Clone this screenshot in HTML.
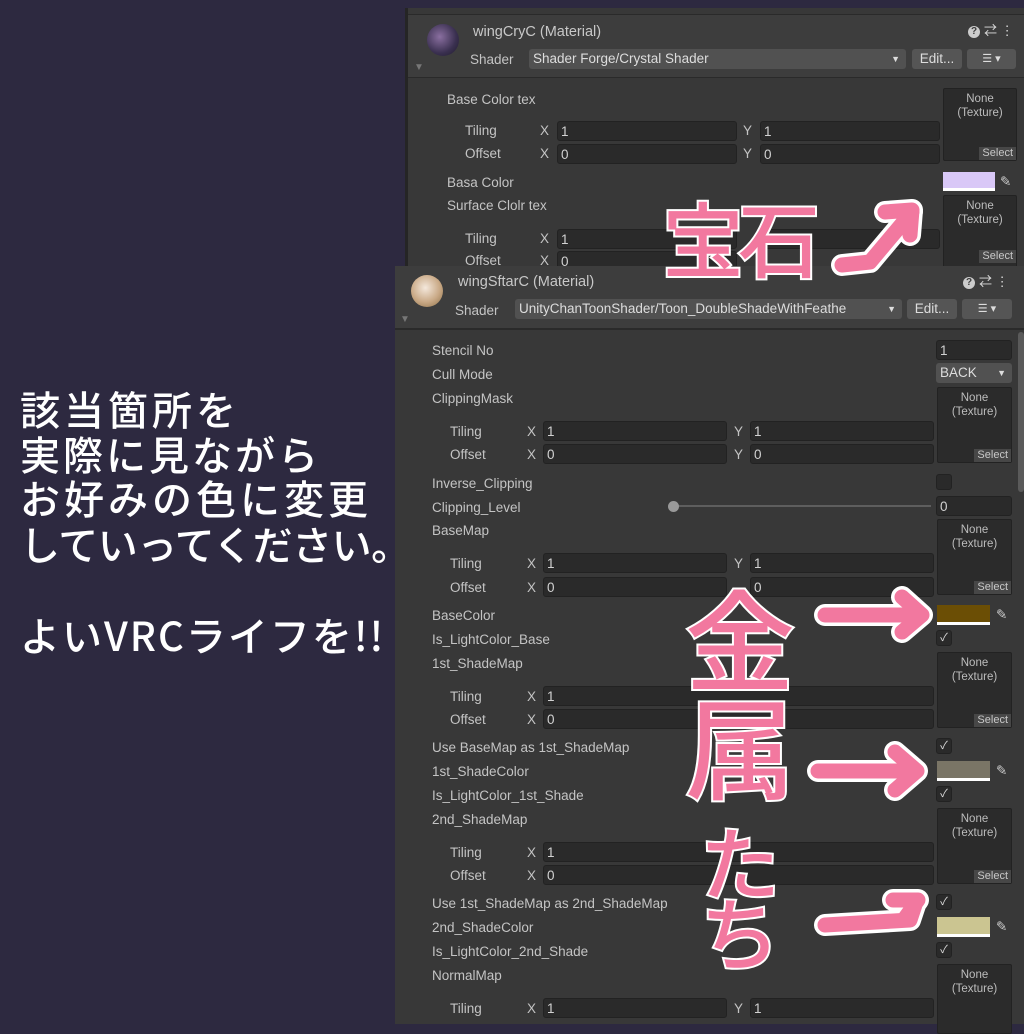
<!DOCTYPE html>
<html><head><meta charset="utf-8"><style>
*{margin:0;padding:0;box-sizing:border-box}
body{width:1024px;height:1024px;background:#2d2940;position:relative;overflow:hidden;font-family:"Liberation Sans","Noto Sans CJK JP",sans-serif;}
.a{position:absolute}
.t{position:absolute;color:#c4c4c4;font-size:13.5px;line-height:16px;white-space:nowrap}
.f{position:absolute;background:#2a2a2a;border:1px solid #222;border-radius:3px;color:#d2d2d2;font-size:13.5px;line-height:19px;padding-left:3px;height:20px}
.tex{position:absolute;background:#2b2b2b;border:1px solid #222;border-radius:2px;color:#bdbdbd;font-size:11.5px;line-height:14px;text-align:center;padding-top:3px}
.tex .s{position:absolute;right:0;bottom:0;background:#474747;font-size:11px;padding:0 3px;line-height:13px;color:#c8c8c8}
.ck{position:absolute;width:16px;height:16px;background:#2a2a2a;border:1px solid #222;border-radius:3px;color:#ddd;font-size:11px;line-height:14px;text-align:center}
.big{position:absolute;left:20px;color:#fff;font-size:40px;font-weight:500;white-space:nowrap;font-family:"Noto Sans CJK JP",sans-serif;line-height:46px}
.pk{position:absolute;color:#f2789f;font-weight:500;font-family:"Noto Sans CJK JP",sans-serif;-webkit-text-stroke:4px #fff;paint-order:stroke fill;white-space:nowrap}
.hq{display:inline-block;width:12px;height:12px;border-radius:50%;background:#ccc;color:#3d3d3d;font-size:10px;line-height:12px;text-align:center;font-weight:bold;vertical-align:middle;margin-right:4px}
</style></head><body>

<!-- top panel -->
<div class="a" style="left:405px;top:8px;width:619px;height:262px;background:#383838;border-left:3px solid #252525"></div>
<div class="a" style="left:408px;top:14px;width:616px;height:64px;background:#3d3d3d;border-top:1px solid #2a2a2a;border-bottom:1px solid #2a2a2a"></div>
<div class="a" style="left:427px;top:24px;width:32px;height:32px;border-radius:50%;background:radial-gradient(circle at 40% 40%,#8a6fa0,#3a3050 60%,#1e1a2a)"></div>
<div class="t" style="left:473px;top:24px;font-size:14.5px;color:#c8c8c8">wingCryC (Material)</div>
<div class="t" style="left:470px;top:52px">Shader</div>
<div class="a" style="left:529px;top:49px;width:377px;height:20px;background:#515151;border-radius:3px;color:#ddd;font-size:13.5px;line-height:20px;padding-left:4px">Shader Forge/Crystal Shader<span style="position:absolute;right:6px;font-size:9px">▼</span></div>
<div class="a" style="left:912px;top:49px;width:50px;height:20px;background:#555;border-radius:3px;color:#ddd;font-size:13.5px;line-height:20px;text-align:center">Edit...</div>
<div class="a" style="left:967px;top:49px;width:49px;height:20px;background:#555;border-radius:3px;color:#ddd;font-size:11px;line-height:20px;text-align:center">☰ ▾</div>
<div class="t" style="left:968px;top:23px;color:#ddd;font-size:13px"><span class="hq">?</span>⇄ ⋮</div>
<div class="t" style="left:414px;top:60px;font-size:10px;color:#777">▼</div>

<div class="t" style="left:447px;top:92px">Base Color tex</div>
<div class="t" style="left:465px;top:123px">Tiling</div><div class="t" style="left:540px;top:123px">X</div><div class="f" style="left:557px;top:121px;width:180px">1</div><div class="t" style="left:743px;top:123px">Y</div><div class="f" style="left:760px;top:121px;width:180px">1</div>
<div class="t" style="left:465px;top:146px">Offset</div><div class="t" style="left:540px;top:146px">X</div><div class="f" style="left:557px;top:144px;width:180px">0</div><div class="t" style="left:743px;top:146px">Y</div><div class="f" style="left:760px;top:144px;width:180px">0</div>
<div class="tex" style="left:943px;top:88px;width:74px;height:73px">None<br>(Texture)<div class="s">Select</div></div>
<div class="t" style="left:447px;top:175px">Basa Color</div>
<div class="a" style="left:943px;top:172px;width:52px;height:19px;background:#d9c8f7;border-bottom:3px solid #fff"></div>
<div class="t" style="left:1000px;top:174px;color:#ccc">✎</div>
<div class="t" style="left:447px;top:198px">Surface Clolr tex</div>
<div class="tex" style="left:943px;top:195px;width:74px;height:75px">None<br>(Texture)<div class="s" style="bottom:6px">Select</div></div>
<div class="t" style="left:465px;top:231px">Tiling</div><div class="t" style="left:540px;top:231px">X</div><div class="f" style="left:557px;top:229px;width:180px">1</div><div class="f" style="left:760px;top:229px;width:180px">1</div>
<div class="t" style="left:465px;top:253px">Offset</div><div class="t" style="left:540px;top:253px">X</div><div class="f" style="left:557px;top:251px;width:180px">0</div>

<!-- bottom panel -->
<div class="a" style="left:395px;top:266px;width:629px;height:758px;background:#383838"></div>
<div class="a" style="left:395px;top:266px;width:629px;height:64px;background:#3d3d3d;border-bottom:2px solid #2a2a2a"></div>
<div class="a" style="left:411px;top:275px;width:32px;height:32px;border-radius:50%;background:radial-gradient(circle at 45% 40%,#f4e8dc,#c9a986 55%,#8a6d45)"></div>
<div class="t" style="left:458px;top:274px;font-size:14.5px;color:#c8c8c8">wingSftarC (Material)</div>
<div class="t" style="left:455px;top:303px">Shader</div>
<div class="a" style="left:515px;top:299px;width:387px;height:20px;background:#515151;border-radius:3px;color:#ddd;font-size:13.5px;line-height:20px;padding-left:4px;overflow:hidden;white-space:nowrap">UnityChanToonShader/Toon_DoubleShadeWithFeathe<span style="position:absolute;right:6px;font-size:9px;background:#515151">▼</span></div>
<div class="a" style="left:907px;top:299px;width:50px;height:20px;background:#555;border-radius:3px;color:#ddd;font-size:13.5px;line-height:20px;text-align:center">Edit...</div>
<div class="a" style="left:962px;top:299px;width:50px;height:20px;background:#555;border-radius:3px;color:#ddd;font-size:11px;line-height:20px;text-align:center">☰ ▾</div>
<div class="t" style="left:963px;top:274px;color:#ddd;font-size:13px"><span class="hq">?</span>⇄ ⋮</div>
<div class="t" style="left:400px;top:312px;font-size:10px;color:#777">▼</div>
<div class="a" style="left:1018px;top:332px;width:6px;height:160px;background:#5a5a5a;border-radius:3px"></div>

<div class="t" style="left:432px;top:343px">Stencil No</div><div class="f" style="left:936px;top:340px;width:76px">1</div>
<div class="t" style="left:432px;top:367px">Cull Mode</div><div class="a" style="left:936px;top:363px;width:76px;height:20px;background:#515151;border-radius:3px;color:#ddd;font-size:13.5px;line-height:20px;padding-left:4px">BACK<span style="position:absolute;right:6px;font-size:9px">▼</span></div>
<div class="t" style="left:432px;top:391px">ClippingMask</div>
<div class="tex" style="left:937px;top:387px;width:75px;height:76px">None<br>(Texture)<div class="s">Select</div></div>
<div class="t" style="left:450px;top:424px">Tiling</div><div class="t" style="left:527px;top:424px">X</div><div class="f" style="left:543px;top:421px;width:184px">1</div><div class="t" style="left:734px;top:424px">Y</div><div class="f" style="left:750px;top:421px;width:184px">1</div>
<div class="t" style="left:450px;top:447px">Offset</div><div class="t" style="left:527px;top:447px">X</div><div class="f" style="left:543px;top:444px;width:184px">0</div><div class="t" style="left:734px;top:447px">Y</div><div class="f" style="left:750px;top:444px;width:184px">0</div>
<div class="t" style="left:432px;top:476px">Inverse_Clipping</div><div class="ck" style="left:936px;top:474px"></div>
<div class="t" style="left:432px;top:500px">Clipping_Level</div>
<div class="a" style="left:673px;top:505px;width:258px;height:2px;background:#5e5e5e"></div>
<div class="a" style="left:668px;top:501px;width:11px;height:11px;border-radius:50%;background:#999"></div>
<div class="f" style="left:936px;top:496px;width:76px">0</div>
<div class="t" style="left:432px;top:523px">BaseMap</div>
<div class="tex" style="left:937px;top:519px;width:75px;height:76px">None<br>(Texture)<div class="s">Select</div></div>
<div class="t" style="left:450px;top:556px">Tiling</div><div class="t" style="left:527px;top:556px">X</div><div class="f" style="left:543px;top:553px;width:184px">1</div><div class="t" style="left:734px;top:556px">Y</div><div class="f" style="left:750px;top:553px;width:184px">1</div>
<div class="t" style="left:450px;top:580px">Offset</div><div class="t" style="left:527px;top:580px">X</div><div class="f" style="left:543px;top:577px;width:184px">0</div><div class="f" style="left:750px;top:577px;width:184px">0</div>
<div class="t" style="left:432px;top:608px">BaseColor</div>
<div class="a" style="left:937px;top:605px;width:53px;height:20px;background:#6b4e05;border-bottom:3px solid #fff"></div><div class="t" style="left:996px;top:607px;color:#ccc">✎</div>
<div class="t" style="left:432px;top:632px">Is_LightColor_Base</div><div class="ck" style="left:936px;top:630px">✓</div>
<div class="t" style="left:432px;top:656px">1st_ShadeMap</div>
<div class="tex" style="left:937px;top:652px;width:75px;height:76px">None<br>(Texture)<div class="s">Select</div></div>
<div class="t" style="left:450px;top:689px">Tiling</div><div class="t" style="left:527px;top:689px">X</div><div class="f" style="left:543px;top:686px;width:391px">1</div>
<div class="t" style="left:450px;top:712px">Offset</div><div class="t" style="left:527px;top:712px">X</div><div class="f" style="left:543px;top:709px;width:391px">0</div>
<div class="t" style="left:432px;top:740px">Use BaseMap as 1st_ShadeMap</div><div class="ck" style="left:936px;top:738px">✓</div>
<div class="t" style="left:432px;top:764px">1st_ShadeColor</div>
<div class="a" style="left:937px;top:761px;width:53px;height:20px;background:#7a7566;border-bottom:3px solid #fff"></div><div class="t" style="left:996px;top:763px;color:#ccc">✎</div>
<div class="t" style="left:432px;top:788px">Is_LightColor_1st_Shade</div><div class="ck" style="left:936px;top:786px">✓</div>
<div class="t" style="left:432px;top:812px">2nd_ShadeMap</div>
<div class="tex" style="left:937px;top:808px;width:75px;height:76px">None<br>(Texture)<div class="s">Select</div></div>
<div class="t" style="left:450px;top:845px">Tiling</div><div class="t" style="left:527px;top:845px">X</div><div class="f" style="left:543px;top:842px;width:391px">1</div>
<div class="t" style="left:450px;top:868px">Offset</div><div class="t" style="left:527px;top:868px">X</div><div class="f" style="left:543px;top:865px;width:391px">0</div>
<div class="t" style="left:432px;top:896px">Use 1st_ShadeMap as 2nd_ShadeMap</div><div class="ck" style="left:936px;top:894px">✓</div>
<div class="t" style="left:432px;top:920px">2nd_ShadeColor</div>
<div class="a" style="left:937px;top:917px;width:53px;height:20px;background:#cbc591;border-bottom:3px solid #fff"></div><div class="t" style="left:996px;top:919px;color:#ccc">✎</div>
<div class="t" style="left:432px;top:944px">Is_LightColor_2nd_Shade</div><div class="ck" style="left:936px;top:942px">✓</div>
<div class="t" style="left:432px;top:968px">NormalMap</div>
<div class="tex" style="left:937px;top:964px;width:75px;height:70px">None<br>(Texture)</div>
<div class="t" style="left:450px;top:1001px">Tiling</div><div class="t" style="left:527px;top:1001px">X</div><div class="f" style="left:543px;top:998px;width:184px">1</div><div class="t" style="left:734px;top:1001px">Y</div><div class="f" style="left:750px;top:998px;width:184px">1</div>

<!-- left text -->
<div class="big" style="top:385px;letter-spacing:4px">該当箇所を</div>
<div class="big" style="top:430px;letter-spacing:3px">実際に見ながら</div>
<div class="big" style="top:474px;letter-spacing:4px">お好みの色に変更</div>
<div class="big" style="top:520px;letter-spacing:-0.5px">していってください。</div>
<div class="big" style="top:611px;letter-spacing:2px">よいVRCライフを!!</div>

<!-- pink annotations -->
<div class="pk" style="left:662px;top:186px;font-size:82px;line-height:100px;letter-spacing:-6px">宝石</div>
<div class="pk" style="left:685px;top:580px;font-size:110px;line-height:110px">金</div>
<div class="pk" style="left:685px;top:688px;font-size:110px;line-height:110px">属</div>
<div class="pk" style="left:700px;top:820px;font-size:80px;line-height:80px">た</div>
<div class="pk" style="left:700px;top:890px;font-size:80px;line-height:80px">ち</div>
<svg class="a" style="left:0;top:0" width="1024" height="1024">
<g fill="none" stroke-linecap="round" stroke-linejoin="round">
<g stroke="#fff" stroke-width="22">
<path d="M842 265 L870 262 L912 212 M885 212 L912 210 L910 235"/>
<path d="M825 615 L920 615 M902 597 L922 615 L902 632"/>
<path d="M818 771 L915 771 M895 752 L917 771 L895 790"/>
<path d="M825 925 L910 920 L915 905 M893 900 L918 900 L905 918"/>
</g>
<g stroke="#f2789f" stroke-width="15">
<path d="M842 265 L870 262 L912 212 M885 212 L912 210 L910 235"/>
<path d="M825 615 L920 615 M902 597 L922 615 L902 632"/>
<path d="M818 771 L915 771 M895 752 L917 771 L895 790"/>
<path d="M825 925 L910 920 L915 905 M893 900 L918 900 L905 918"/>
</g></g></svg>
</body></html>
